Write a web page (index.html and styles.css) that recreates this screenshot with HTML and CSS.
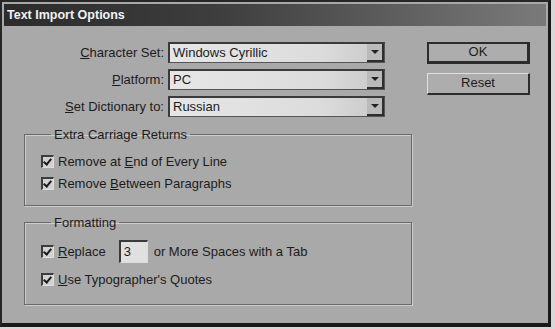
FILE: index.html
```html
<!DOCTYPE html>
<html lang="en">
<head>
    <meta charset="UTF-8">
    <title>Text Import Options</title>
    <link rel="stylesheet" href="styles.css">
</head>
<body>
    <div class="window">
        <div class="titlebar">Text Import Options</div>
        <div class="content">
            <div class="top">
                <div class="fields">
                    <label class="field-label"><u>C</u>haracter Set:</label>
                    <div class="select"><span class="value">Windows Cyrillic</span><span class="arrow"></span></div>
                    <label class="field-label"><u>P</u>latform:</label>
                    <div class="select"><span class="value">PC</span><span class="arrow"></span></div>
                    <label class="field-label"><u>S</u>et Dictionary to:</label>
                    <div class="select"><span class="value">Russian</span><span class="arrow"></span></div>
                </div>
                <div class="buttons">
                    <div class="button default">OK</div>
                    <div class="button">Reset</div>
                </div>
            </div>

            <fieldset class="group group-returns">
                <legend>Extra Carriage Returns</legend>
                <div class="option">
                    <span class="checkbox"></span>
                    <span>Remove at <u>E</u>nd of Every Line</span>
                </div>
                <div class="option">
                    <span class="checkbox"></span>
                    <span>Remove <u>B</u>etween Paragraphs</span>
                </div>
            </fieldset>

            <fieldset class="group group-format">
                <legend>Formatting</legend>
                <div class="option tall">
                    <span class="checkbox"></span>
                    <span><u>R</u>eplace</span>
                    <span class="spaces">3</span>
                    <span>or More Spaces with a Tab</span>
                </div>
                <div class="option tall">
                    <span class="checkbox"></span>
                    <span><u>U</u>se Typographer's Quotes</span>
                </div>
            </fieldset>
        </div>
    </div>
</body>
</html>
```

FILE: styles.css
```css
body {
    margin: 0;
    background-color: #d8d8d8;
    font-family: "Liberation Sans", Arial, sans-serif;
    font-size: 13px;
    color: #1c1c1c;
}

.window {
    box-sizing: border-box;
    width: 551px;
    height: 327px;
    padding: 2px;
    border-top: 2px solid #262626;
    border-left: 2px solid #262626;
    border-right: 3px solid #1a1a1a;
    border-bottom: 4px solid #1a1a1a;
    background-color: #a9a9a9;
}

.titlebar {
    height: 22px;
    line-height: 22px;
    padding-left: 3px;
    font-size: 12.5px;
    font-weight: bold;
    color: #f2f2f2;
    background: linear-gradient(to right, #2b2b2b 0%, #3e3e3e 40%, #7a7a7a 100%);
}

.content {
    padding-top: 16px;
}

.top {
    display: flex;
    align-items: flex-start;
}

.fields {
    display: grid;
    grid-template-columns: 160px 217px;
    column-gap: 4px;
    row-gap: 6px;
    align-items: center;
}

.field-label {
    text-align: right;
}

.select {
    box-sizing: border-box;
    height: 21px;
    display: flex;
    align-items: stretch;
    border-top: 2px solid #3a3a3a;
    border-left: 2px solid #3a3a3a;
    border-right: 1px solid #555;
    border-bottom: 1px solid #555;
    background: linear-gradient(to right, #e6e6e6 0%, #dcdcdc 70%, #c8c8c8 100%);
}

.select .value {
    flex: 1;
    padding-left: 3px;
    line-height: 17px;
}

.arrow {
    width: 15px;
    background-color: #bababa;
    border-right: 2px solid #2e2e2e;
    border-bottom: 2px solid #2e2e2e;
    display: flex;
    align-items: center;
    justify-content: center;
}

.arrow::after {
    content: "";
    border-left: 4px solid transparent;
    border-right: 4px solid transparent;
    border-top: 4px solid #222;
}

.buttons {
    margin-left: 42px;
    display: flex;
    flex-direction: column;
    gap: 9px;
}

.button {
    box-sizing: border-box;
    width: 103px;
    height: 22px;
    line-height: 18px;
    text-align: center;
    border-top: 1px solid #e0e0e0;
    border-left: 1px solid #e0e0e0;
    border-right: 2px solid #2c2c2c;
    border-bottom: 2px solid #2c2c2c;
    background-color: #adadad;
}

.button.default {
    border: 2px solid #2c2c2c;
    border-right-width: 3px;
    border-bottom-width: 3px;
    line-height: 16px;
}

.group {
    box-sizing: border-box;
    width: 388px;
    margin: 10px 0 0 20px;
    padding: 11px 0 14px 16px;
    border: 1px solid #686868;
    box-shadow: 1px 1px 0 #cdcdcd, inset 1px 1px 0 #cdcdcd;
    min-inline-size: 0;
}

.group legend {
    margin-left: 10px;
    padding: 0 3px;
    line-height: 15px;
}

.group-format {
    margin-top: 9px;
    padding-top: 10px;
    padding-bottom: 13px;
}

.option {
    height: 16px;
    display: flex;
    align-items: center;
    gap: 4px;
}

.option + .option {
    margin-top: 6px;
}

.option.tall {
    height: 23px;
}

.group-format .option + .option {
    margin-top: 5px;
}

.checkbox {
    box-sizing: border-box;
    width: 13px;
    height: 13px;
    border-top: 2px solid #3c3c3c;
    border-left: 2px solid #3c3c3c;
    border-right: 1px solid #dedede;
    border-bottom: 1px solid #dedede;
    background-color: #d2d2d2;
    position: relative;
}

.checkbox::after {
    content: "";
    position: absolute;
    left: 2px;
    top: 0px;
    width: 3px;
    height: 6px;
    border-right: 2px solid #1a1a1a;
    border-bottom: 2px solid #1a1a1a;
    transform: rotate(40deg);
}

.spaces {
    box-sizing: border-box;
    width: 29px;
    height: 23px;
    margin-left: 9px;
    margin-right: 2px;
    padding-left: 3px;
    line-height: 19px;
    border-top: 2px solid #3a3a3a;
    border-left: 2px solid #3a3a3a;
    border-right: 1px solid #dcdcdc;
    border-bottom: 1px solid #dcdcdc;
    background-color: #e0e0e0;
}
```
